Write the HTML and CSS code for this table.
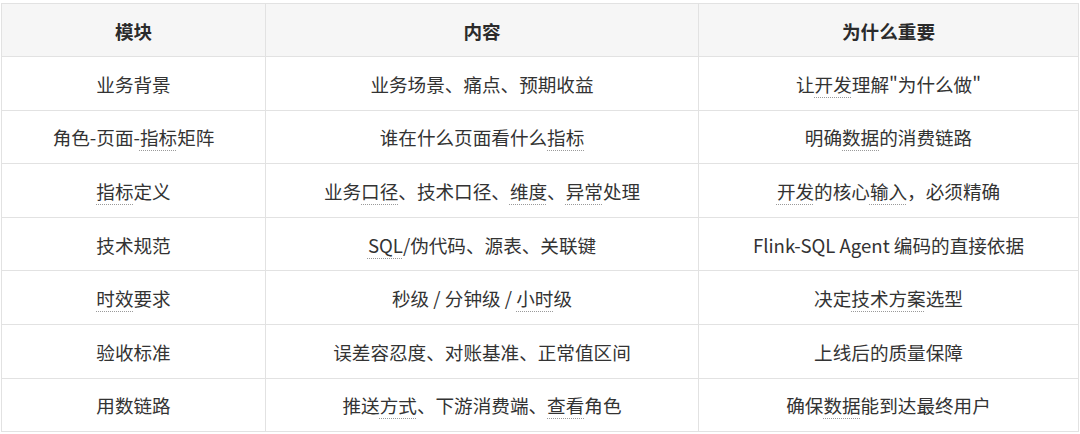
FILE: index.html
```html
<!DOCTYPE html>
<html lang="zh-CN">
<head>
<meta charset="utf-8">
<title>模块说明</title>
<link rel="stylesheet" href="styles.css">
</head>
<body>
<table class="spec">
  <colgroup>
    <col class="c1">
    <col class="c2">
    <col class="c3">
  </colgroup>
  <thead>
    <tr><th>模块</th><th>内容</th><th>为什么重要</th></tr>
  </thead>
  <tbody>
    <tr>
      <td>业务背景</td>
      <td>业务场景、痛点、预期收益</td>
      <td>让<span class="dot">开发</span>理解"为什么做"</td>
    </tr>
    <tr>
      <td>角色-页面-<span class="dot">指标</span>矩阵</td>
      <td>谁在什么页面看什么<span class="dot">指标</span></td>
      <td>明确<span class="dot">数据</span>的消费链路</td>
    </tr>
    <tr>
      <td><span class="dot">指标</span>定义</td>
      <td>业务<span class="dot">口径</span>、技术口径、<span class="dot">维度</span>、<span class="dot">异常</span>处理</td>
      <td><span class="dot">开发</span>的核心<span class="dot">输入</span>，必须精确</td>
    </tr>
    <tr>
      <td>技术规范</td>
      <td><span class="dot">SQL</span>/伪代码、源表、关联键</td>
      <td>Flink-SQL Agent 编码的直接依据</td>
    </tr>
    <tr>
      <td><span class="dot">时效</span>要求</td>
      <td>秒级 / 分钟级 / <span class="dot">小时</span>级</td>
      <td>决定<span class="dot">技术方案</span>选型</td>
    </tr>
    <tr>
      <td>验收标准</td>
      <td>误差容忍度、对账基准、正常值区间</td>
      <td>上线后的质量保障</td>
    </tr>
    <tr>
      <td>用数链路</td>
      <td>推送<span class="dot">方式</span>、下游消费端、<span class="dot">查看</span>角色</td>
      <td>确保<span class="dot">数据</span>能到达最终用户</td>
    </tr>
  </tbody>
</table>
</body>
</html>
```

FILE: styles.css
```css
html, body {
  margin: 0;
  padding: 0;
  background: #ffffff;
}

body {
  padding: 3px 0 0 1px;
  font-family: "Noto Sans CJK SC", "Noto Sans", sans-serif;
  color: #333333;
}

.spec {
  border-collapse: collapse;
  table-layout: fixed;
  width: 1077px;
  font-size: 18.6px;
}

.c1 { width: 264px; }
.c2 { width: 433px; }
.c3 { width: 380px; }

.spec th,
.spec td {
  border: 1px solid #e2e2e2;
  text-align: center;
  vertical-align: middle;
  padding: 0 8px;
  white-space: nowrap;
}

.spec th {
  height: 52px;
  background: #f6f6f6;
  font-weight: 700;
  color: #2b2b2b;
}

.spec td {
  height: 52.6px;
  font-weight: 400;
}

.dot {
  text-decoration-line: underline;
  text-decoration-style: dotted;
  text-decoration-color: #9a9a9a;
  text-decoration-thickness: 1px;
  text-underline-offset: 5px;
}
```
